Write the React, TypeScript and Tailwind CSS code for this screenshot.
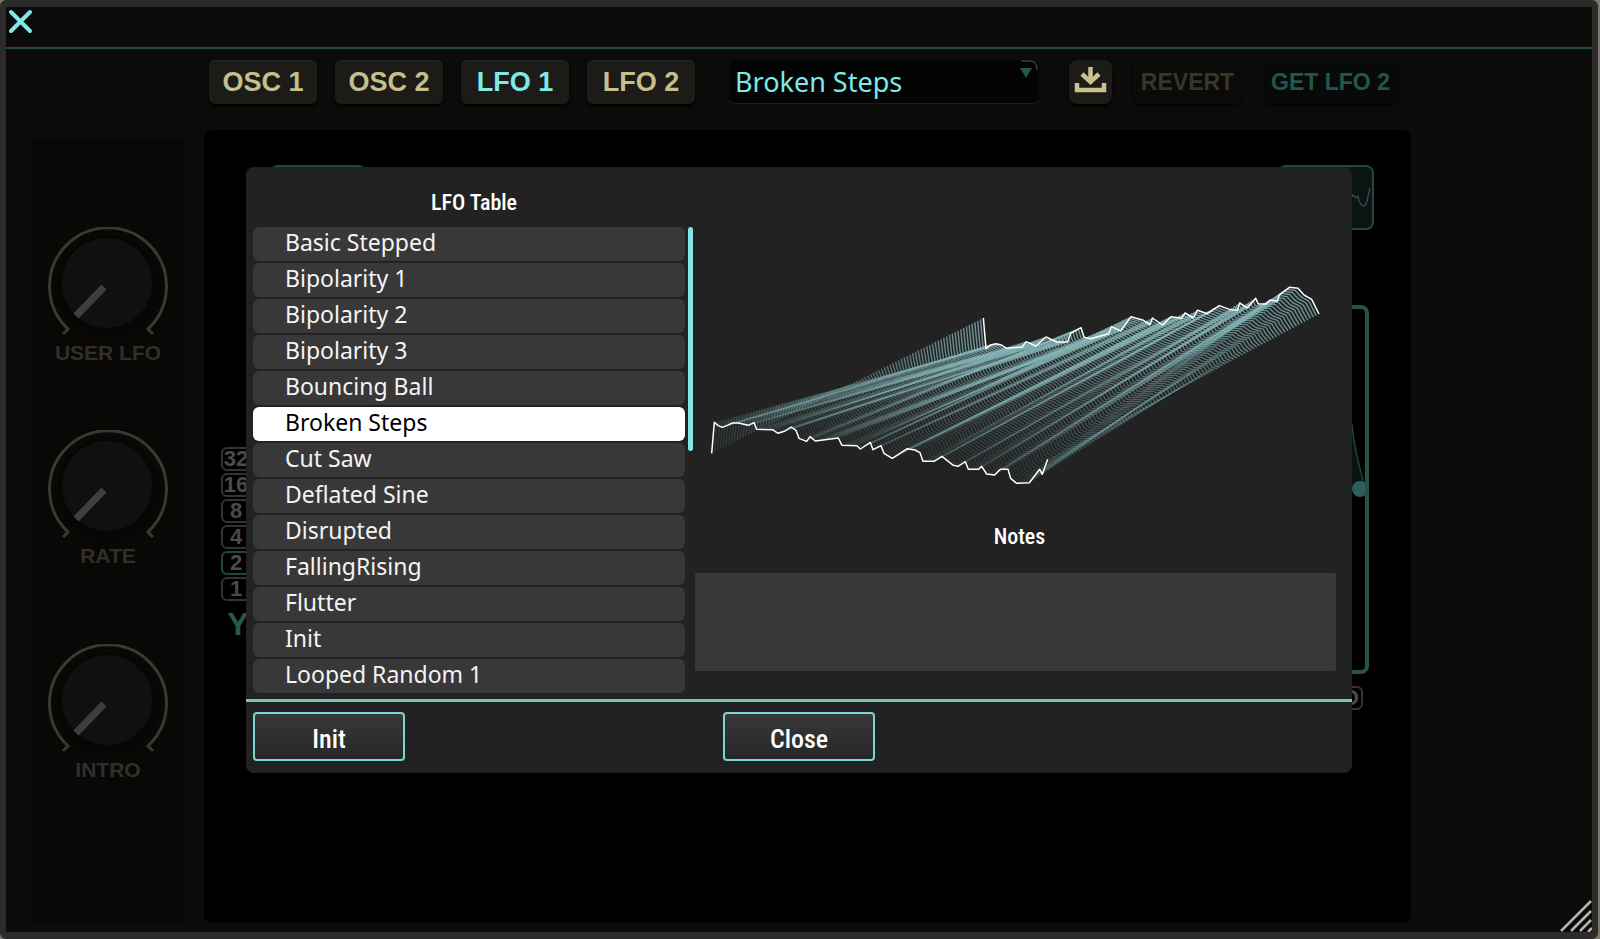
import { useState } from 'react';

const TABS = ['OSC 1', 'OSC 2', 'LFO 1', 'LFO 2'];

const TABLES = [
  'Basic Stepped',
  'Bipolarity 1',
  'Bipolarity 2',
  'Bipolarity 3',
  'Bouncing Ball',
  'Broken Steps',
  'Cut Saw',
  'Deflated Sine',
  'Disrupted',
  'FallingRising',
  'Flutter',
  'Init',
  'Looped Random 1',
];

const KNOBS = ['USER LFO', 'RATE', 'INTRO'];
const STEPS = ['32', '16', '8', '4', '2', '1'];

type Point = [number, number];

// first and last frame of the table, the ones between are interpolated
const FRONT: Point[] = [
  [65, 580], [73, 487], [85, 497], [97, 502], [112, 496], [127, 489], [145, 489], [175, 496],
  [192, 488], [200, 508], [248, 509], [264, 520], [285, 513], [303, 501], [318, 511], [327, 535],
  [350, 544], [360, 530], [376, 543], [445, 534], [456, 556], [501, 557], [511, 567], [541, 547],
  [549, 569], [573, 557], [582, 580], [607, 595], [652, 566], [675, 570], [690, 578], [699, 604],
  [732, 604], [756, 589], [790, 616], [804, 619], [826, 605], [835, 628], [866, 628], [875, 619],
  [890, 642], [914, 645], [931, 628], [954, 628], [962, 655], [980, 670], [1018, 668], [1049, 628],
  [1057, 643], [1073, 598],
];

const BACK: Point[] = [
  [880, 174], [888, 266], [900, 256], [917, 251], [932, 254], [950, 265], [997, 261], [1008, 245],
  [1038, 258], [1068, 231], [1100, 246], [1133, 246], [1142, 220], [1173, 203], [1182, 232],
  [1202, 236], [1256, 221], [1264, 200], [1292, 213], [1323, 170], [1360, 181], [1380, 194],
  [1387, 174], [1418, 195], [1443, 170], [1475, 175], [1485, 159], [1510, 174], [1522, 151],
  [1552, 161], [1588, 137], [1620, 149], [1642, 150], [1649, 129], [1672, 144], [1697, 115],
  [1705, 132], [1728, 132], [1740, 120], [1762, 124], [1768, 105], [1798, 82], [1824, 85],
  [1842, 105], [1865, 118], [1887, 162],
];

const SAMPLES = 336;
const FRAMES = 96;

function sample(points: Point[], t: number) {
  const x0 = points[0][0];
  const x1 = points[points.length - 1][0];
  const x = x0 + (x1 - x0) * t;
  for (let i = 1; i < points.length; i++) {
    const [bx, by] = points[i];
    const [ax, ay] = points[i - 1];
    if (x <= bx) return [x, ay + ((by - ay) * (x - ax)) / (bx - ax)];
  }
  return points[points.length - 1];
}

function framePath(k: number) {
  const out: string[] = [];
  for (let i = 0; i <= SAMPLES; i++) {
    const [fx, fy] = sample(FRONT, i / SAMPLES);
    const [bx, by] = sample(BACK, i / SAMPLES);
    out.push(`${(fx + (bx - fx) * k).toFixed(1)},${(fy + (by - fy) * k).toFixed(1)}`);
  }
  return out.join(' ');
}

const WAVES = Array.from({ length: FRAMES - 1 }, (_, i) => {
  const k = (i + 1) / FRAMES;
  return { k, points: framePath(k) };
});

function WaveTable() {
  return (
    <svg viewBox="15 0 1923 750" className="block w-full" fill="none" aria-hidden="true">
      {WAVES.map(({ k, points }) => (
        <polyline
          key={k}
          points={points}
          stroke="#84b3b6"
          strokeWidth="4.2"
          strokeOpacity={0.12 + 0.7 * k}
        />
      ))}
      <polyline points={BACK.join(' ')} stroke="#ffffff" strokeWidth="4.5" strokeLinejoin="round" />
      <polyline points={FRONT.join(' ')} stroke="#ffffff" strokeWidth="4.5" strokeLinejoin="round" />
    </svg>
  );
}

function Knob({ label }: { label: string }) {
  return (
    <div className="flex flex-col items-center">
      <svg width="122" height="112" viewBox="0 0 122 112" fill="none" aria-hidden="true">
        <circle cx="61" cy="60" r="51" fill="#060605" />
        <circle cx="60" cy="56" r="45" fill="#111010" />
        <path d="M16 107l5-5A58.500 58.500 0 1 1 101 102l5 5" stroke="#3b392f" strokeWidth="3" />
        <path d="M57 60L29 89" stroke="#403f3e" strokeWidth="7" />
      </svg>
      <span className="text-[21px] leading-7 font-bold text-[#312f29]">{label}</span>
    </div>
  );
}

function Toolbar({ table, onTable }: { table: string; onTable: (t: string) => void }) {
  const [tab, setTab] = useState('LFO 1');

  return (
    <div className="flex items-center pt-[11px] pl-[203px] font-bold">
      <div className="flex gap-[18px]">
        {TABS.map((t) => (
          <button
            key={t}
            onClick={() => setTab(t)}
            className={`h-11 w-[108px] rounded-md border-t border-[#282622] bg-[#1c1b18] text-[27px] leading-none shadow-[0_2px_3px_#000] ${
              t === tab ? 'text-[#7fe9e7]' : 'text-[#c5bf8c]'
            }`}
          >
            {t}
          </button>
        ))}
      </div>

      <div className="relative ml-[34px]">
        <select
          aria-label="LFO table"
          value={table}
          onChange={(e) => onTable(e.target.value)}
          className="block h-11 w-[310px] appearance-none rounded-md border-b border-[#1c1b1a] bg-[#040404] pl-[6px] font-['Noto_Sans',sans-serif] text-[27px] leading-10 font-normal text-[#7fe9e7] outline-none"
        >
          {TABLES.map((t) => (
            <option key={t}>{t}</option>
          ))}
        </select>
        <svg
          width="24"
          height="24"
          viewBox="0 0 24 24"
          fill="none"
          className="pointer-events-none absolute top-0 right-0"
          aria-hidden="true"
        >
          <path d="M6 1h9q7 0 7 9" stroke="#1f4742" strokeWidth="1.5" />
          <path d="M5 8h12l-6 10z" fill="#23564f" />
        </svg>
      </div>

      <button
        aria-label="Save"
        className="ml-[30px] h-11 w-[43px] rounded-lg bg-[#1c1b18] shadow-[0_2px_3px_#000]"
      >
        <svg width="43" height="44" viewBox="0 0 43 44" fill="none" stroke="#c9c28e" aria-hidden="true">
          <path d="M8 23v7h27v-7" strokeWidth="4.500" />
          <path d="M21.500 7v13" strokeWidth="4.500" />
          <path d="M13 14l8.500 8 8.500-8" strokeWidth="4.500" />
        </svg>
      </button>
      <button className="ml-[21px] h-11 w-[109px] rounded-md bg-[#0a0a09] text-[23px] leading-none text-[#38352a] shadow-[0_1px_3px_#000]">
        REVERT
      </button>
      <button className="ml-[23px] h-11 w-[131px] rounded-md bg-[#080909] text-[23px] leading-none whitespace-nowrap text-[#23554f] shadow-[0_1px_3px_#000]">
        GET LFO 2
      </button>
    </div>
  );
}

function LfoScreen() {
  return (
    <div className="pt-[35px] pr-[37px] pl-[17px]">
      <div className="flex justify-between pl-[49px]">
        <div className="h-[65px] w-24 rounded-lg border-2 border-[#244742] bg-[#0b1413]" />
        <div className="flex h-[65px] w-24 justify-end rounded-lg border-2 border-[#244742] bg-[#0b1413]">
          <svg width="24" height="61" viewBox="0 0 24 61" fill="none" aria-hidden="true">
            <path
              d="M0 26l3 5 2-3 3 3 2-2 1 5q5 10 8 0l3-13"
              stroke="#2d4a46"
              strokeWidth="1.5"
            />
          </svg>
        </div>
      </div>

      <div className="mt-[75px] flex h-[369px] items-stretch">
        <div className="flex w-[30px] flex-col items-center justify-end gap-[2px] pb-8">
          {STEPS.map((s) => (
            <span
              key={s}
              className={`flex h-6 w-[30px] shrink-0 items-center justify-center rounded-md border-2 text-[22px] leading-none font-bold text-[#4c4b49] ${
                s === '2' ? 'border-[#204742]' : 'border-[#353433]'
              }`}
            >
              {s}
            </span>
          ))}
          <span className="pt-[3px] pl-[4px] text-[32px] leading-9 font-bold text-[#27594f]">Y</span>
        </div>
        <div className="mr-[5px] ml-4 flex flex-1 justify-end rounded-lg border-4 border-[#27524a]">
          <svg width="40" height="361" viewBox="0 0 40 361" fill="none" aria-hidden="true">
            <path d="M0 80L27 115q2 24 12 60l-8 6H0z" fill="#081413" />
            <path d="M27 115q2 24 12 60" stroke="#1f443e" strokeWidth="1.5" />
            <circle cx="35" cy="180" r="8" fill="#2b5f58" />
          </svg>
        </div>
      </div>

      <div className="mt-3 mr-[11px] flex justify-end">
        <span className="flex h-6 w-7 items-center justify-end rounded-md border-2 border-[#353433] pr-[2px] text-[22px] leading-none font-bold text-[#4c4b49]">
          D
        </span>
      </div>
    </div>
  );
}

function TableDialog({ selected, onSelect }: { selected: string; onSelect: (t: string) => void }) {
  return (
    <div
      role="dialog"
      aria-label="LFO Table"
      className="absolute top-[37px] right-[59px] left-[42px] rounded-lg bg-[#222222] text-white"
    >
      <div className="flex h-[532px]">
        <div className="w-[449px] shrink-0 pl-[7px]">
          <h2 className="flex h-[60px] w-[442px] items-center justify-center pt-3 font-['Roboto_Condensed',sans-serif] text-[22px] leading-8 font-medium">
            LFO Table
          </h2>
          <div className="flex justify-between">
            <ul className="flex w-[432px] flex-col gap-[2px]">
              {TABLES.map((t) => (
                <li key={t}>
                  <button
                    onClick={() => onSelect(t)}
                    className={`block h-[34px] w-full rounded-md pb-1 pl-8 text-left font-['Noto_Sans',sans-serif] text-[23px] leading-[30px] ${
                      t === selected ? 'bg-white text-black' : 'bg-[#383838] text-[#f4f4f4]'
                    }`}
                  >
                    {t}
                  </button>
                </li>
              ))}
            </ul>
            <div className="mr-[2px] h-[224px] w-[5px] rounded-full bg-[#7fe6e4]" />
          </div>
        </div>

        <div className="flex min-w-0 flex-1 flex-col pt-[93px] pr-4">
          <WaveTable />
          <label
            htmlFor="notes"
            className="flex h-[52px] items-center justify-center pt-[2px] pl-2 font-['Roboto_Condensed',sans-serif] text-[22px] leading-8 font-medium"
          >
            Notes
          </label>
          <textarea
            id="notes"
            className="mt-[11px] block h-[98px] w-full resize-none rounded-xs bg-[#383838] p-2 outline-none"
          />
        </div>
      </div>

      <div className="flex h-[74px] gap-[318px] border-t-[3px] border-[#7fbfbc] pt-[10px] pl-[7px] font-['Roboto_Condensed',sans-serif] text-[26px] leading-none font-medium">
        <button className="h-[49px] w-[152px] rounded-sm border-2 border-[#7ad6d1] bg-linear-to-b from-[#383838] to-[#272727] pt-1">
          Init
        </button>
        <button className="h-[49px] w-[152px] rounded-sm border-2 border-[#7ad6d1] bg-linear-to-b from-[#383838] to-[#272727] pt-1">
          Close
        </button>
      </div>
    </div>
  );
}

export default function App() {
  const [table, setTable] = useState('Broken Steps');

  return (
    <div className="min-h-screen bg-[#7b776b] pr-[2px]">
      <div className="relative flex min-h-screen flex-col overflow-hidden rounded-md border-x-[6px] border-y-[7px] border-[#2c2a2a] bg-[#0c0b09] font-['Liberation_Sans',Arial,sans-serif]">
        <header className="h-[42px] border-b-2 border-[#1f4a46]">
          <button aria-label="Close editor" className="block pt-[2px] pl-px">
            <svg width="26" height="26" viewBox="0 0 26 26" fill="none" aria-hidden="true">
              <path d="M4 3L23 22M23 3L4 22" stroke="#7fe9e7" strokeWidth="4" strokeLinecap="round" />
            </svg>
          </button>
        </header>

        <Toolbar table={table} onTable={setTable} />

        <div className="flex flex-1 pt-[26px] pr-[181px] pb-[9px] pl-[25px]">
          <div className="mt-2 flex w-[154px] flex-col items-center gap-[63px] bg-[#090807] pt-[89px]">
            {KNOBS.map((k) => (
              <div key={k} className="last:mt-[11px]">
                <Knob label={k} />
              </div>
            ))}
          </div>

          <div className="relative ml-[19px] flex-1 rounded-lg bg-black">
            <LfoScreen />
            <TableDialog selected={table} onSelect={setTable} />
          </div>
        </div>

        <svg
          width="32"
          height="32"
          viewBox="0 0 32 32"
          className="absolute right-0 bottom-0"
          aria-hidden="true"
        >
          <path d="M1 31L31 1M11 31L31 11M20 31L31 20M28 32l4-4" stroke="#b4b4b2" strokeWidth="2.500" />
        </svg>
      </div>
    </div>
  );
}
